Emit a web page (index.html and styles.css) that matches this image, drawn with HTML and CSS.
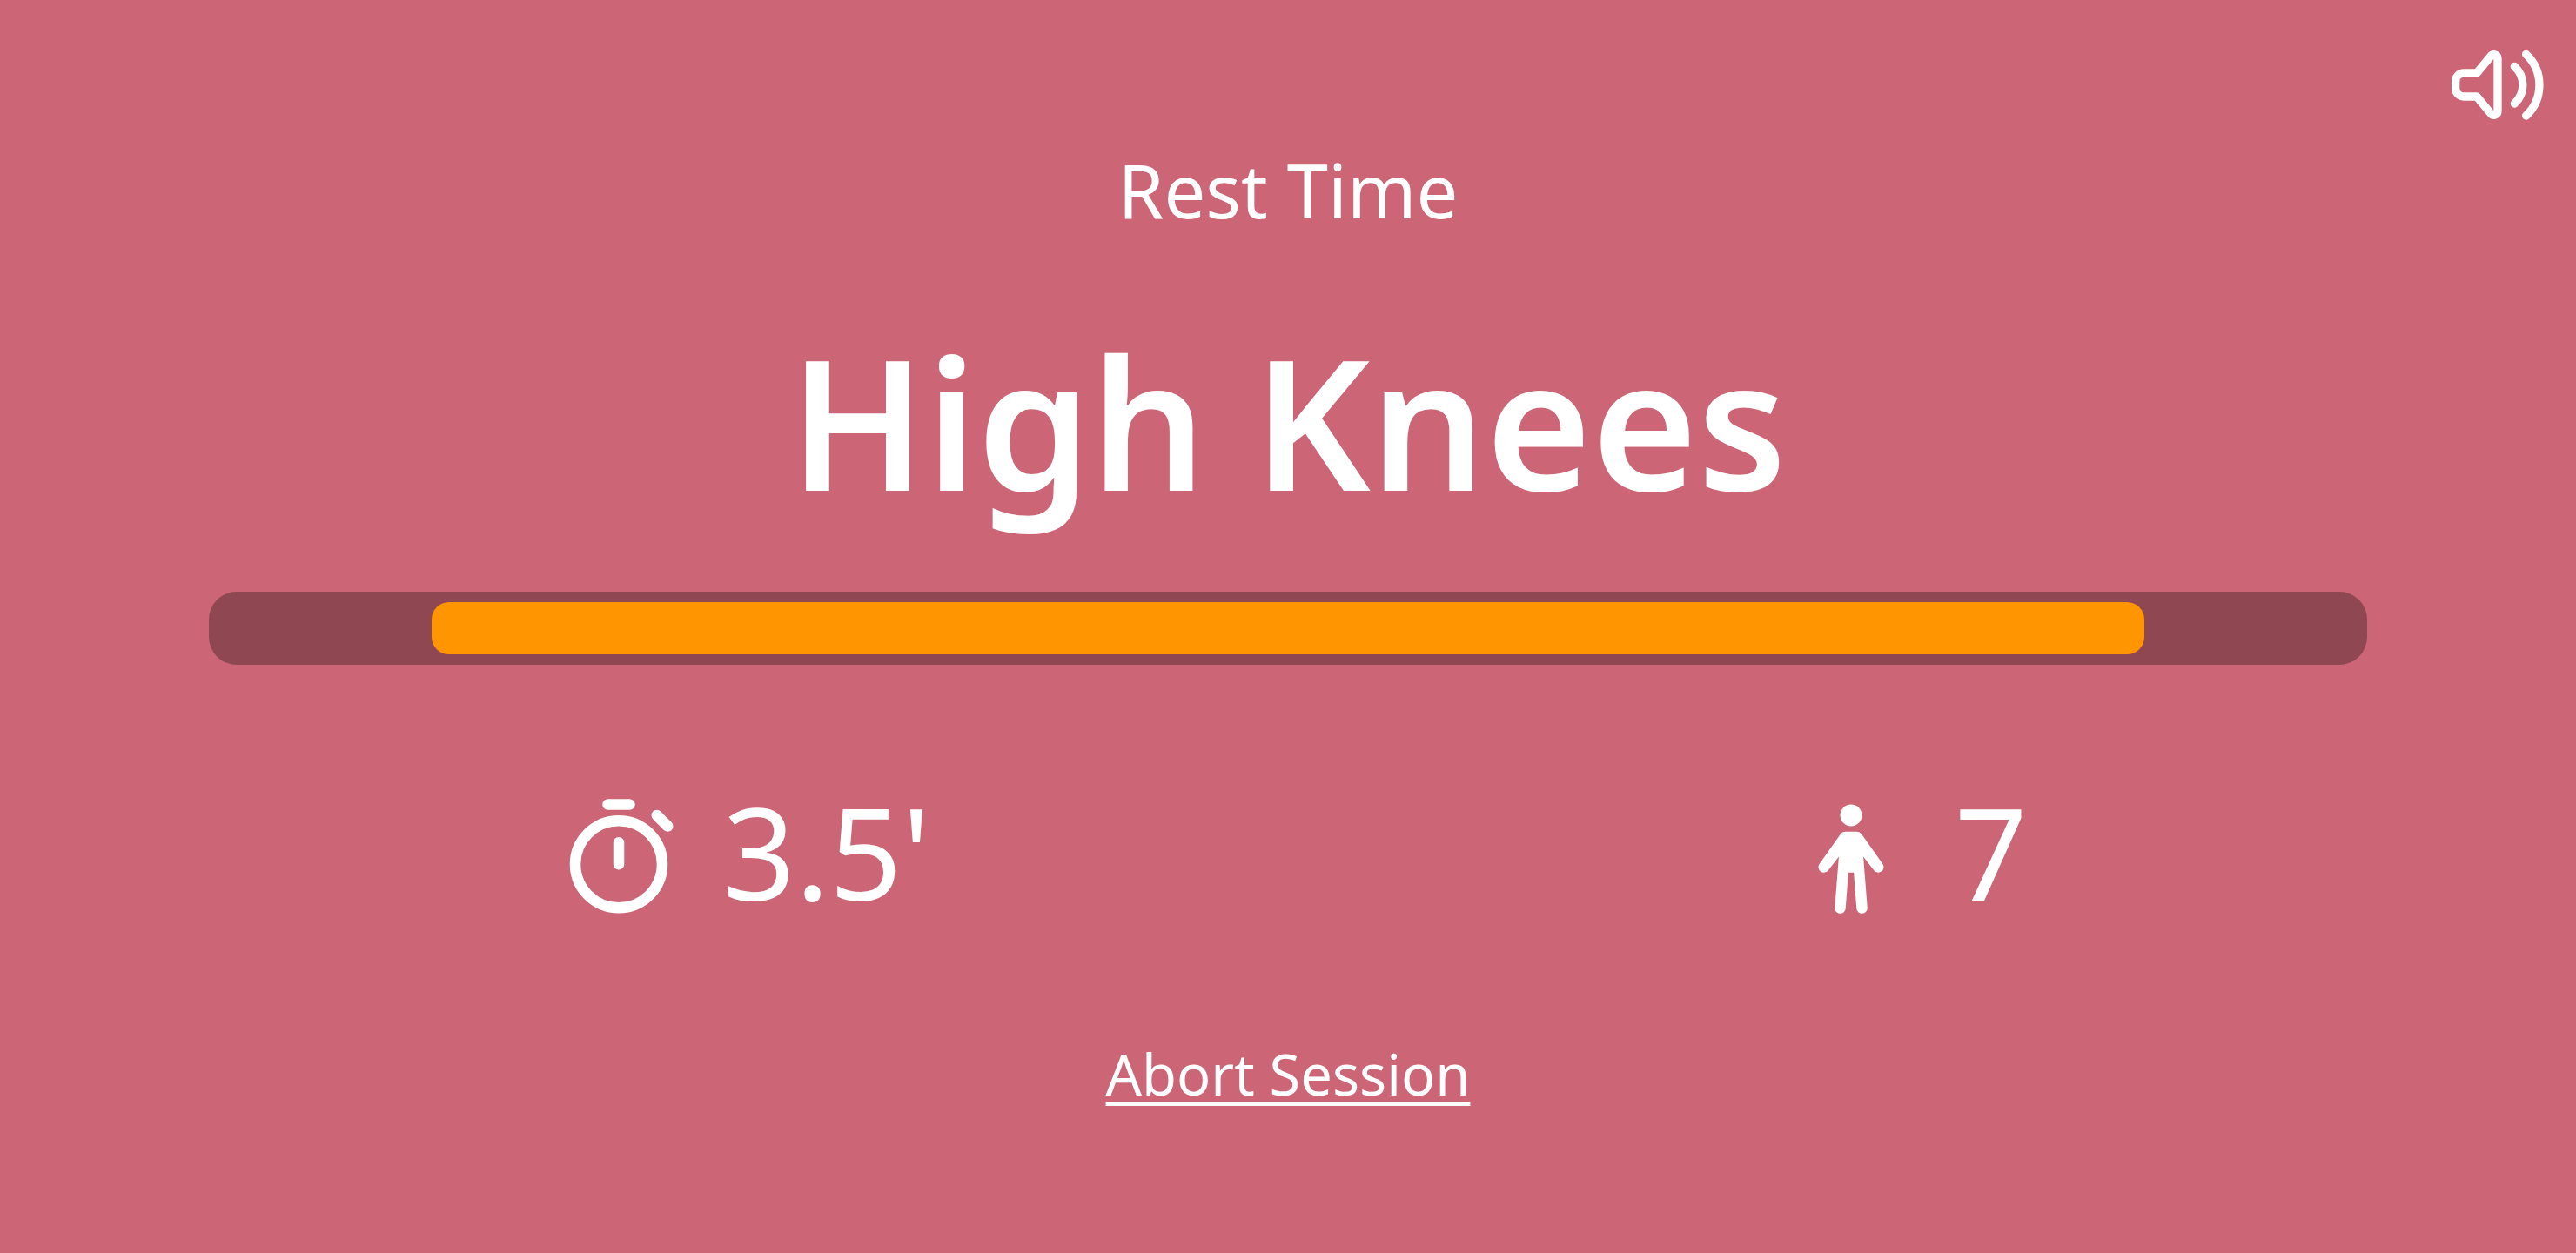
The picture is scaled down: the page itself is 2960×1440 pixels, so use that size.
FILE: index.html
```html
<!DOCTYPE html>
<html lang="en">
<head>
<meta charset="utf-8">
<meta name="viewport" content="width=device-width, initial-scale=1">
<title>High Knees</title>
<link rel="stylesheet" href="styles.css">
</head>
<body>
<header class="topbar">
  <button class="sound" type="button" aria-label="Toggle sound">
    <svg class="sound-icon" viewBox="0 0 420 360" aria-hidden="true">
      <path d="M138 132H93A28 28 0 0 0 65 160V185A28 28 0 0 0 93 213H138L185 270C194 282 210 277 210 262V83C210 68 194 63 185 75Z"/>
      <path d="M268 109C306 144 306 202 268 237"/>
      <path d="M308 67C369 125 369 221 308 279"/>
    </svg>
  </button>
</header>
<main class="session">
  <p class="phase">Rest Time</p>
  <h1 class="exercise">High Knees</h1>
  <div class="track" role="progressbar" aria-label="Time left" aria-valuenow="80" aria-valuemin="0" aria-valuemax="100">
    <div class="fill" style="width: 80.13%"></div>
  </div>
  <div class="stats">
    <div class="stat">
      <svg class="stat-icon" viewBox="0 0 24 24" aria-hidden="true">
        <path class="line" d="M10 2H14M12 9V13M19 4L21 6"/>
        <circle class="line" cx="12" cy="13" r="8"/>
      </svg>
      <span class="value">3.5'</span>
    </div>
    <div class="stat">
      <svg class="stat-icon" viewBox="0 0 24 24" aria-hidden="true">
        <circle cx="12" cy="4" r="2"/>
        <path d="M10.9 7H13.1Q13.6 7 13.9 7.4L17.8 12.9A1 1 0 0 1 16.2 14.1L14.25 11.6L15 21A1 1 0 0 1 13 21.1L12.5 14.5H11.5L11 21.1A1 1 0 0 1 9 21L9.75 11.6L7.8 14.1A1 1 0 0 1 6.2 12.9L10.1 7.4Q10.4 7 10.9 7Z"/>
      </svg>
      <span class="value">7</span>
    </div>
  </div>
  <button class="abort" type="button">Abort Session</button>
</main>
</body>
</html>
```
FILE: styles.css
```css
* {
  box-sizing: border-box;
}

body {
  margin: 0;
  min-height: 100vh;
  background: #cc6575;
  color: #fff;
  font-family: "Noto Sans", "Open Sans", sans-serif;
}

button {
  padding: 0;
  border: 0;
  background: none;
  color: inherit;
  font-family: inherit;
  cursor: pointer;
}

.topbar {
  display: flex;
  justify-content: flex-end;
  padding: 40px 20px 8px;
}

.sound-icon {
  display: block;
  width: 140px;
  height: 120px;
  fill: none;
  stroke: currentColor;
  stroke-width: 28;
  stroke-linecap: round;
  stroke-linejoin: round;
}

.session {
  display: flex;
  flex-direction: column;
  align-items: center;
}

.phase {
  margin: 0 0 96px;
  font-size: 85px;
  line-height: 100px;
}

.exercise {
  margin: 0 0 76px;
  font-size: 208px;
  font-weight: 600;
  line-height: 240px;
}

.track {
  display: flex;
  justify-content: center;
  align-self: stretch;
  margin: 0 240px 148px;
  padding: 12px;
  border-radius: 32px;
  background: #8f4752;
}

.fill {
  height: 60px;
  border-radius: 20px;
  background: #ff9500;
}

.stats {
  display: flex;
  justify-content: space-between;
  align-self: stretch;
  margin-bottom: 132px;
  padding: 0 21.3% 0 21.5%;
}

.stat {
  display: flex;
  gap: 44px;
}

.stat-icon {
  width: 150px;
  height: 150px;
  fill: currentColor;
}

.line {
  fill: none;
  stroke: currentColor;
  stroke-width: 2;
  stroke-linecap: round;
}

.value {
  font-size: 146px;
  line-height: 134px;
}

.abort {
  font-size: 65px;
  line-height: 80px;
  text-decoration: underline;
  text-decoration-thickness: 4px;
  text-underline-offset: 8px;
  text-decoration-skip-ink: none;
}
```
